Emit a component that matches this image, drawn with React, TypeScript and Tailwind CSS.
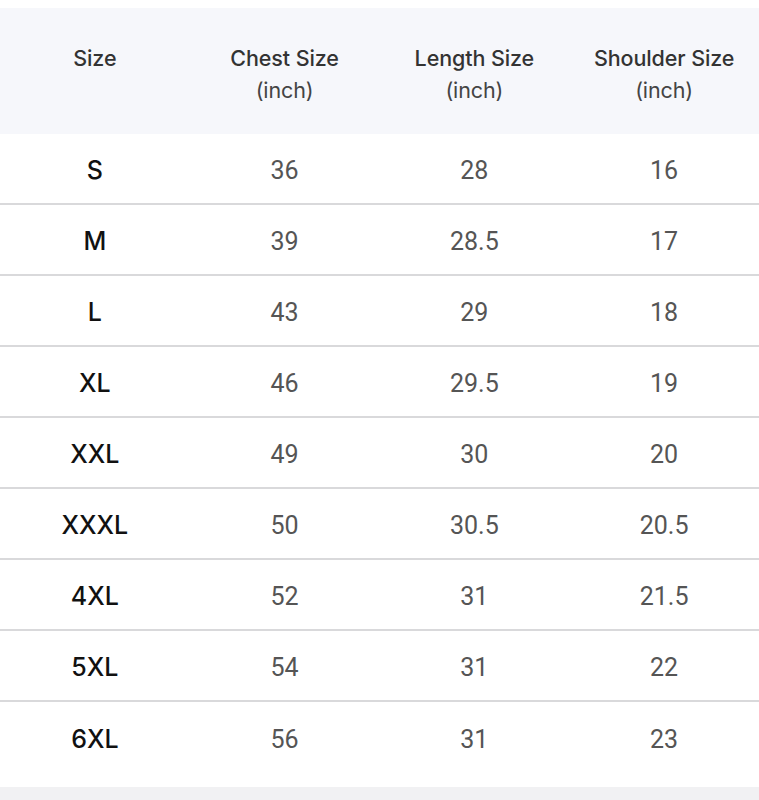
import React from "react";

const rows = [
  ["S", "36", "28", "16"],
  ["M", "39", "28.5", "17"],
  ["L", "43", "29", "18"],
  ["XL", "46", "29.5", "19"],
  ["XXL", "49", "30", "20"],
  ["XXXL", "50", "30.5", "20.5"],
  ["4XL", "52", "31", "21.5"],
  ["5XL", "54", "31", "22"],
  ["6XL", "56", "31", "23"],
];

const headers: [string, string | null][] = [
  ["Size", null],
  ["Chest Size", "(inch)"],
  ["Length Size", "(inch)"],
  ["Shoulder Size", "(inch)"],
];

export default function App() {
  return (
    <div className="w-[759px] h-[800px] bg-white flex flex-col overflow-hidden">
      <div className="h-[8px] bg-white" />
      <div className="grid grid-cols-4 h-[126px] bg-[#f6f7fb] font-['Inter',sans-serif] text-[21.5px] leading-[32px] text-[#333] font-medium tracking-[-0.1px]">
        {headers.map(([a, b]) => (
          <div key={a} className="flex flex-col items-center justify-center pt-[6px]">
            <span>{a}</span>
            {b ? <span className="font-normal text-[#444]">{b}</span> : <span className="h-[32px] invisible">x</span>}
          </div>
        ))}
      </div>
      {rows.map((r, i) => (
        <div
          key={r[0]}
          className={`grid grid-cols-4 h-[71px] pt-[5px] ${i < rows.length - 1 ? "border-b-2 border-[#d9d9db]" : ""}`}
        >
          <div className="flex items-center justify-center font-['Inter',sans-serif] font-medium text-[25px] text-[#111]">
            {r[0]}
          </div>
          {r.slice(1).map((v, j) => (
            <div key={j} className="flex items-center justify-center font-['Roboto',sans-serif] text-[25px] text-[#555]">
              {v}
            </div>
          ))}
        </div>
      ))}
      <div className="flex-1" />
      <div className="h-[13px] bg-[#f1f1f3]" />
    </div>
  );
}
